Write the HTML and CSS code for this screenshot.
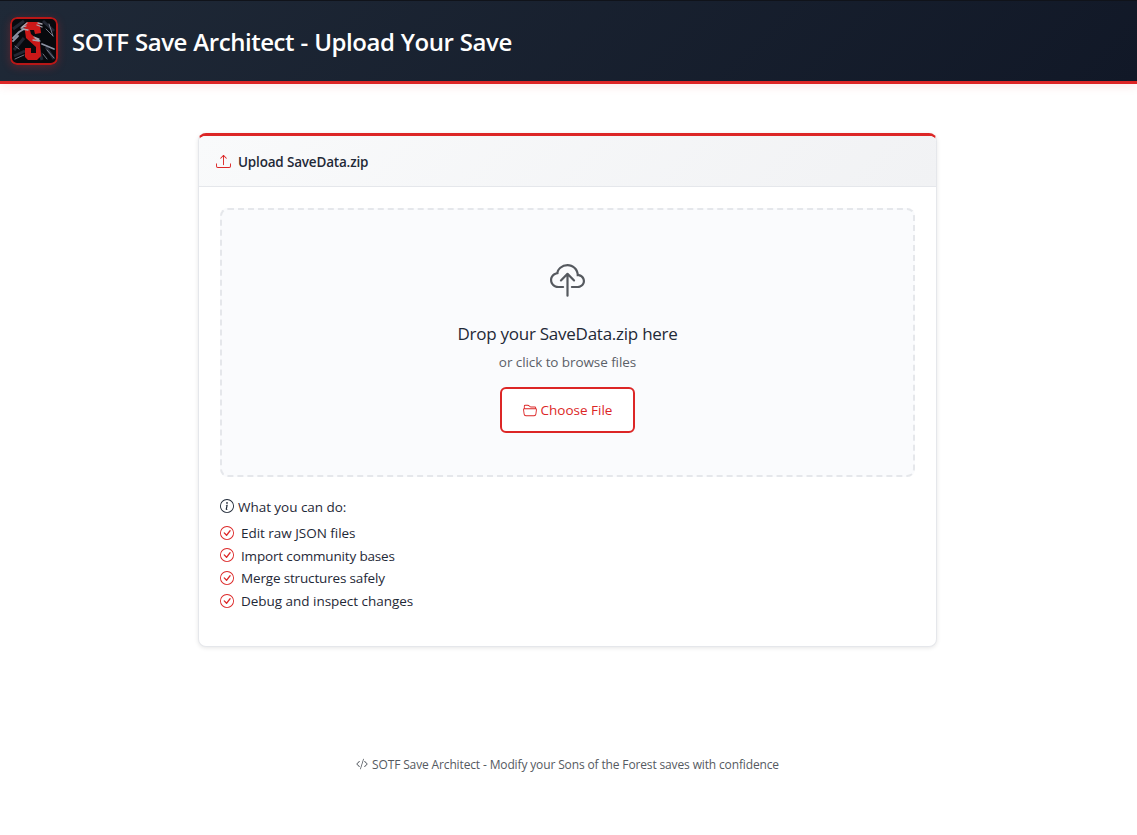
FILE: index.html
```html
<!DOCTYPE html>
<html lang="en">
<head>
<meta charset="utf-8">
<title>SOTF Save Architect</title>
<link rel="stylesheet" href="styles.css">
</head>
<body>
<header class="topbar">
  <svg class="logo" viewBox="0 0 48 48" aria-label="SOTF logo">
    <rect x="1" y="1" width="46" height="46" rx="6" fill="#07090d" stroke="#b81717" stroke-width="2"/>
    <g fill="none" stroke="#232733" stroke-width="3">
      <path d="M3 12 14 4M4 39l11-5M33 4l11 10M4 33l10-12M32 43l-3-10M36 30l8 12"/>
    </g>
    <g fill="none" stroke="#8c92a3" stroke-linecap="round">
      <path stroke-width="1.8" d="M3 21l6-6 5-3M32 27l12 5M3 24l5-5"/>
      <path stroke-width=".8" d="M36 12l7 7M5 42l9-4M33 37l4 5M37 33l7 8M5 29l4 3M39 7l4 12"/>
    </g>
    <path fill="#cb1818" d="M14 8l3-3h11l2 3 1 8-6 1-1-4h-4l1 4 9 8 1 14-4 4H18l-3-3v-9h6v5h5v-6l-10-9z"/>
    <path fill="none" stroke="#aaa5af" stroke-width="1.3" stroke-linecap="round" d="M11 11l5-2M12 12l6 1M12 10l5-4M32 7l-4-1M32 10l-5-2M30 24l-5-3M29 22l-5-2M29 24l-6-1"/>
  </svg>
  <h1 class="title">SOTF Save Architect - Upload Your Save</h1>
</header>
<main class="card">
  <div class="card-header">
    <svg class="icon icon-upload" viewBox="0 0 16 16"><path d="M.5 9.9a.5.5 0 0 1 .5.5v2.5a1 1 0 0 0 1 1h12a1 1 0 0 0 1-1v-2.5a.5.5 0 0 1 1 0v2.5a2 2 0 0 1-2 2H2a2 2 0 0 1-2-2v-2.5a.5.5 0 0 1 .5-.5"/><path d="M7.646 1.146a.5.5 0 0 1 .708 0l3 3a.5.5 0 0 1-.708.708L8.5 2.707V11.5a.5.5 0 0 1-1 0V2.707L5.354 4.854a.5.5 0 1 1-.708-.708z"/></svg>
    <h2 class="card-title">Upload SaveData.zip</h2>
  </div>
  <div class="card-body">
    <section class="dropzone">
      <svg class="icon icon-cloud" viewBox="0 0 16 16"><path d="M4.406 1.342A5.53 5.53 0 0 1 8 0c2.69 0 4.923 2 5.166 4.579C14.758 4.804 16 6.137 16 7.773 16 9.569 14.502 11 12.687 11H10a.5.5 0 0 1 0-1h2.688C13.979 10 15 8.988 15 7.773c0-1.216-1.02-2.228-2.313-2.228h-.5v-.5C12.188 2.825 10.328 1 8 1a4.53 4.53 0 0 0-2.941 1.1c-.757.652-1.153 1.438-1.153 2.055v.448l-.445.049C2.064 4.805 1 5.952 1 7.318 1 8.785 2.23 10 3.781 10H6a.5.5 0 0 1 0 1H3.781C1.708 11 0 9.366 0 7.318c0-1.763 1.266-3.223 2.942-3.593.143-.863.698-1.723 1.464-2.383"/><path d="M7.646 4.146a.5.5 0 0 1 .708 0l3 3a.5.5 0 0 1-.708.708L8.5 5.707V14.5a.5.5 0 0 1-1 0V5.707L5.354 7.854a.5.5 0 1 1-.708-.708z"/></svg>
      <p class="drop-title">Drop your SaveData.zip here</p>
      <p class="drop-hint">or click to browse files</p>
      <button class="choose" type="button">
        <svg class="icon" viewBox="0 0 16 16"><path d="M1 3.5A1.5 1.5 0 0 1 2.5 2h2.764c.958 0 1.76.56 2.311 1.184C7.985 3.648 8.48 4 9 4h4.5A1.5 1.5 0 0 1 15 5.5v.64c.57.265.94.876.856 1.546l-.64 5.124A2.5 2.5 0 0 1 12.733 15H3.266a2.5 2.5 0 0 1-2.481-2.19l-.64-5.124A1.5 1.5 0 0 1 1 6.14zM2 6h12v-.5a.5.5 0 0 0-.5-.5H9c-.964 0-1.71-.629-2.174-1.154C6.374 3.334 5.82 3 5.264 3H2.5a.5.5 0 0 0-.5.5zm-.367 1a.5.5 0 0 0-.496.562l.64 5.124A1.5 1.5 0 0 0 3.266 14h9.468a1.5 1.5 0 0 0 1.489-1.314l.64-5.124A.5.5 0 0 0 14.367 7z"/></svg>
        <span class="choose-label">Choose File</span>
      </button>
    </section>
    <section class="features">
      <h3 class="features-title">
        <svg class="icon" viewBox="0 0 16 16"><path d="M8 15A7 7 0 1 1 8 1a7 7 0 0 1 0 14m0 1A8 8 0 1 0 8 0a8 8 0 0 0 0 16"/><path d="m8.93 6.588-2.29.287-.082.38.45.083c.294.07.352.176.288.469l-.738 3.468c-.194.897.105 1.319.808 1.319.545 0 1.178-.252 1.465-.598l.088-.416c-.2.176-.492.246-.686.246-.275 0-.375-.193-.304-.533zM9 4.5a1 1 0 1 1-2 0 1 1 0 0 1 2 0"/></svg>
        <span class="features-label">What you can do:</span>
      </h3>
      <ul class="list">
        <li class="item"><svg class="icon" viewBox="0 0 16 16"><use href="#check"/></svg><span class="item-label">Edit raw JSON files</span></li>
        <li class="item"><svg class="icon" viewBox="0 0 16 16"><use href="#check"/></svg><span class="item-label snug">Import community bases</span></li>
        <li class="item"><svg class="icon" viewBox="0 0 16 16"><use href="#check"/></svg><span class="item-label snug">Merge structures safely</span></li>
        <li class="item"><svg class="icon" viewBox="0 0 16 16"><use href="#check"/></svg><span class="item-label">Debug and inspect changes</span></li>
      </ul>
    </section>
  </div>
</main>
<footer class="footer">
  <svg class="icon icon-code" viewBox="0 0 16 16"><path d="M10.478 1.647a.5.5 0 1 0-.956-.294l-4 13a.5.5 0 0 0 .956.294zM4.854 4.146a.5.5 0 0 1 0 .708L1.707 8l3.147 3.146a.5.5 0 0 1-.708.708l-3.5-3.5a.5.5 0 0 1 0-.708l3.5-3.5a.5.5 0 0 1 .708 0m6.292 0a.5.5 0 0 0 0 .708L14.293 8l-3.147 3.146a.5.5 0 0 0 .708.708l3.5-3.5a.5.5 0 0 0 0-.708l-3.5-3.5a.5.5 0 0 0-.708 0"/></svg>
  <span class="footer-text">SOTF Save Architect - Modify your Sons of the Forest saves with confidence</span>
</footer>
<svg class="defs" width="0" height="0"><symbol id="check" viewBox="0 0 16 16"><path d="M8 15A7 7 0 1 1 8 1a7 7 0 0 1 0 14m0 1A8 8 0 1 0 8 0a8 8 0 0 0 0 16"/><path d="m10.97 4.97-.02.022-3.473 4.425-2.093-2.094a.75.75 0 0 0-1.06 1.06L6.97 11.03a.75.75 0 0 0 1.079-.02l3.992-4.99a.75.75 0 0 0-1.071-1.05"/></symbol></svg>
</body>
</html>
```
FILE: styles.css
```css
* { box-sizing: border-box; }
body { margin: 0; background: #fff; color: #1f2937; font-family: "Segoe UI", "Open Sans", "Noto Sans", sans-serif; font-size: 13.5px; overflow: hidden; }
h1, h2, h3, p, ul { margin: 0; padding: 0; font-weight: 400; }
.defs { display: none; }
.icon { display: block; flex: none; width: 14px; height: 14px; fill: currentColor; }

.topbar { display: flex; align-items: center; gap: 14px; height: 84px; padding: 0 10px; border-top: 1px solid #10131a; border-bottom: 3px solid #dc2626; background: linear-gradient(135deg, #1f2937, #111827); box-shadow: 0 2px 10px rgba(220, 38, 38, .1); }
.logo { width: 48px; height: 48px; border-radius: 7px; box-shadow: 0 2px 8px rgba(220, 38, 38, .3); }
.title { padding-top: 2px; color: #fff; font-size: 24px; font-weight: 600; line-height: 36px; letter-spacing: -.45px; word-spacing: .6px; white-space: nowrap; }

.card { width: 739px; height: 514px; margin: 49px 0 0 198px; border: 1px solid #e5e7eb; border-top: 3px solid #dc2626; border-radius: 8px; background: #fff; box-shadow: 0 1px 4px rgba(0, 0, 0, .1); overflow: hidden; }
.card-header { display: flex; align-items: center; gap: 7px; height: 51px; padding: 0 17px; border-bottom: 1px solid #e5e7eb; background: linear-gradient(135deg, #f9fafb, #f1f2f4); }
.icon-upload { width: 15px; height: 15px; color: #dc2626; }
.card-title { padding-top: 2px; font-size: 13.5px; font-weight: 600; letter-spacing: -.18px; }
.card-body { padding: 21px; }

.dropzone { display: flex; flex-direction: column; align-items: center; height: 269px; padding-top: 54px; border: 2px dashed #e5e7eb; border-radius: 8px; background: #fafbfd; }
.icon-cloud { width: 35px; height: 35px; color: #55595f; }
.drop-title { margin-top: 22px; font-size: 17px; line-height: 26px; letter-spacing: -.25px; }
.drop-hint { margin-top: 5px; color: #5b6068; line-height: 20px; letter-spacing: -.08px; }
.choose { display: flex; align-items: center; justify-content: center; gap: 4px; width: 135px; height: 46px; margin-top: 15px; padding: 0; border: 2px solid #dc2626; border-radius: 6px; background: #fff; color: #dc2626; font: inherit; }

.features { padding-top: 19px; }
.features-title { display: flex; align-items: center; gap: 4px; height: 21px; font-size: 13.5px; }
.features-title .icon { margin-bottom: 2px; }
.features-label { letter-spacing: -.04px; }
.list { padding-top: 5px; list-style: none; }
.item { display: flex; align-items: center; gap: 7px; height: 22.6px; }
.item .icon { margin-bottom: 1px; color: #dc2626; }
.item-label { letter-spacing: -.03px; }
.snug { letter-spacing: -.16px; }

.footer { display: flex; align-items: center; justify-content: center; gap: 4px; height: 20px; margin-top: 107px; padding-right: 2px; color: #555a61; font-size: 12px; }
.icon-code { width: 12px; height: 12px; }
.footer-text { letter-spacing: -.14px; }
```
